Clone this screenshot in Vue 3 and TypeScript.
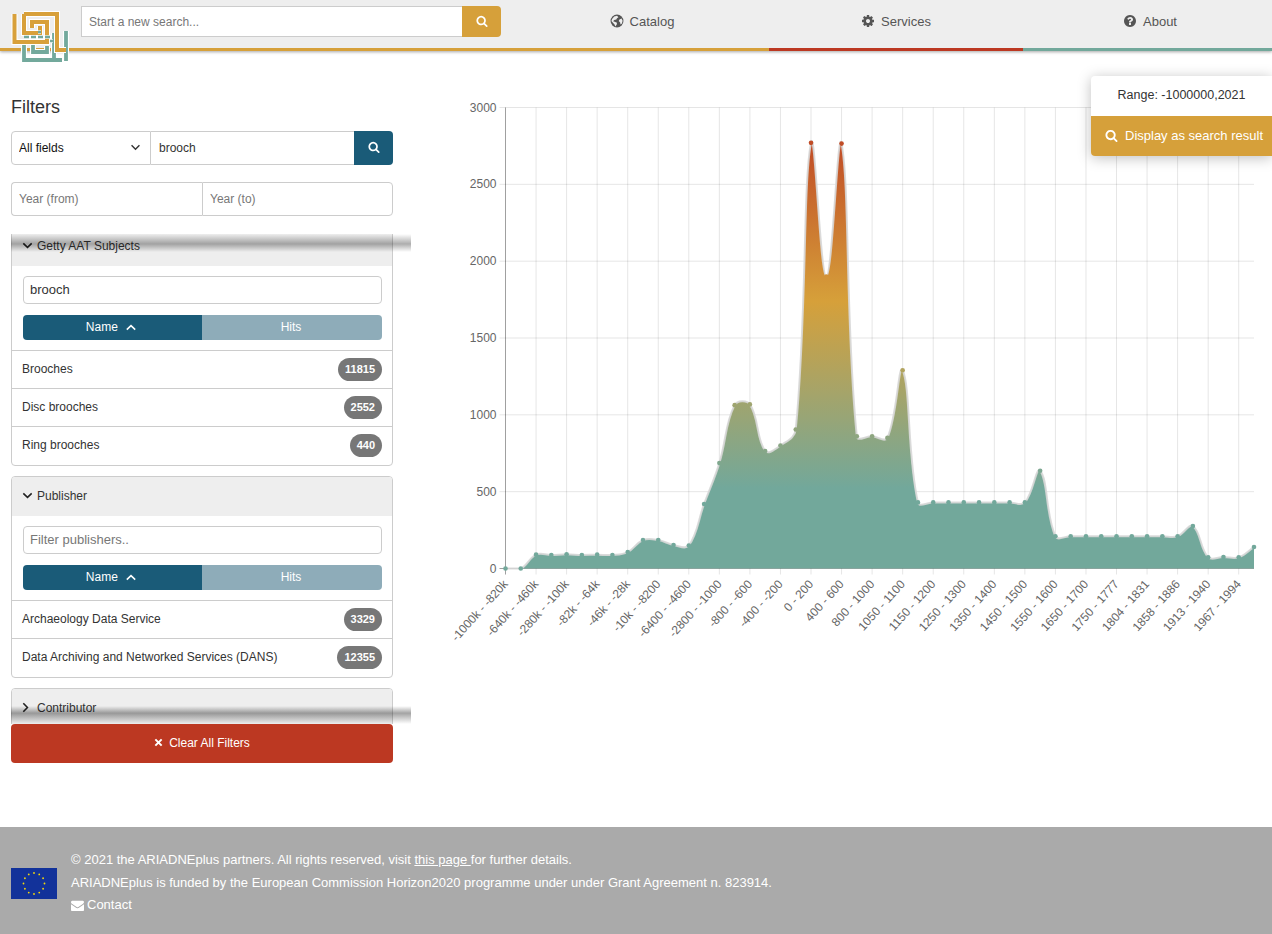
<template>
  <div class="page">
    <!-- Top bar -->
    <header class="topbar">
      <div class="topbar-left">
        <div class="search-box">
          <input class="search-input" type="text" placeholder="Start a new search..." />
          <button class="search-btn">
            <svg class="fa" viewBox="0 0 1792 1792"><path :d="ICONS.search" /></svg>
          </button>
        </div>
      </div>
      <a v-for="item in navItems" :key="item.label" class="nav-item" :class="item.cls">
        <svg v-if="item.label !== 'Catalog'" class="nav-icon" viewBox="0 0 1792 1792"><path :d="item.icon" /></svg>
        <svg v-else class="nav-icon" viewBox="0 0 20 20">
          <circle cx="10" cy="10" r="9.2" fill="#555" />
          <path d="M6 3.5l4-1 2 2-2 1.500-1 2-3 .5-1.500 2 3 1 2.500 1-.5 3-2 2.500-1-3-2-2-2.500-3 1-3zM13.500 8l3-1.500 1.500 3-1 4-2 1.500-.5-3-2-2z" fill="#eee" />
        </svg>
        <span>{{ item.label }}</span>
      </a>
    </header>

    <!-- Logo sits over the bar -->
    <svg class="logo" viewBox="10 8 60 58">
      <g fill="none" stroke-linejoin="miter">
        <path :d="LOGO_TEAL" stroke="#fff" stroke-width="6" />
        <path :d="LOGO_TEAL" stroke="#73a99c" stroke-width="3.800" />
        <path :d="LOGO_GOLD" stroke="#fff" stroke-width="6" />
        <path :d="LOGO_GOLD" stroke="#d8a03a" stroke-width="4" />
        <path d="M24 37H52M50 41H53M38 32H41" stroke="#fff" stroke-width="3.600" />
        <path d="M24 37H52M50 41H53M38 32H41" stroke="#73a99c" stroke-width="2.400" stroke-dasharray="5 2" />
      </g>
    </svg>

    <main class="content">
      <!-- Filters column -->
      <aside class="sidebar">
        <h2 class="filters-title">Filters</h2>

        <div class="input-row">
          <div class="select-wrap">
            <select class="field-select">
              <option>All fields</option>
            </select>
            <svg class="select-caret" viewBox="0 0 12 8"><path d="M1.500 1.500L6 6l4.500-4.500" /></svg>
          </div>
          <input class="field-input dark" type="text" value="brooch" />
          <button class="go-btn">
            <svg class="fa" viewBox="0 0 1792 1792"><path :d="ICONS.search" /></svg>
          </button>
        </div>

        <div class="input-row year-row">
          <input class="field-input" type="text" placeholder="Year (from)" />
          <input class="field-input" type="text" placeholder="Year (to)" />
        </div>

        <div class="facet-scroller">
          <div class="facet-list">
            <section v-for="facet in facets" :key="facet.title" class="facet">
              <div class="facet-head">
                <svg v-if="facet.open" class="chev" viewBox="0 0 12 8"><path d="M1.200 1.500L6 6.200l4.800-4.700" /></svg>
                <svg v-else class="chev chev-right" viewBox="0 0 8 12"><path d="M1.500 1.200L6.200 6l-4.700 4.800" /></svg>
                <span>{{ facet.title }}</span>
              </div>
              <template v-if="facet.open">
                <div class="facet-tools">
                  <input class="facet-input" type="text" :value="facet.query" :placeholder="facet.placeholder" />
                  <div class="sorter">
                    <button class="sort-btn active">
                      Name
                      <svg class="sort-chev" viewBox="0 0 12 8"><path d="M1.200 6.500L6 1.800l4.800 4.700" /></svg>
                    </button>
                    <button class="sort-btn">Hits</button>
                  </div>
                </div>
                <div v-for="row in facet.rows" :key="row.name" class="facet-row">
                  <span class="row-name">{{ row.name }}</span>
                  <span class="badge">{{ row.count }}</span>
                </div>
              </template>
            </section>
          </div>
          <div class="scroll-shade shade-top"></div>
          <div class="scroll-shade shade-bottom"></div>
        </div>

        <button class="clear-btn">
          <svg class="clear-x" viewBox="0 0 10 10"><path d="M1.500 1.500l7 7M8.500 1.500l-7 7" /></svg>
          Clear All Filters
        </button>
      </aside>

      <!-- Timeline chart -->
      <div class="chart-col">
        <svg class="chart" :viewBox="`450 95 822 560`">
          <defs>
            <linearGradient id="areaFill" gradientUnits="userSpaceOnUse" x1="0" y1="110" x2="0" y2="500">
              <stop offset="0" stop-color="#bc3a22" />
              <stop offset="0.49" stop-color="#d6a03a" />
              <stop offset="0.97" stop-color="#72a89b" />
              <stop offset="1" stop-color="#72a89b" />
            </linearGradient>
          </defs>

          <g class="grid">
            <line v-for="t in yTicks" :key="'h' + t" :x1="X0 - 6" :x2="X1" :y1="yPos(t)" :y2="yPos(t)" />
            <line v-for="(l, i) in xLabels" :key="'v' + i" :x1="xPos(i * 2)" :x2="xPos(i * 2)" :y1="Y_TOP" :y2="Y0 + 6" />
          </g>
          <line class="axis" :x1="X0" :x2="X0" :y1="Y_TOP" :y2="Y0 + 6" />
          <line class="axis" :x1="X0 - 6" :x2="X1" :y1="Y0" :y2="Y0" />

          <path :d="areaPath" fill="url(#areaFill)" />
          <path :d="linePath" class="area-line" />
          <circle v-for="(p, i) in points" :key="'p' + i" :cx="p.x" :cy="p.y" r="2.300" fill="url(#areaFill)" />

          <text v-for="t in yTicks" :key="'yl' + t" class="tick" text-anchor="end" :x="X0 - 9" :y="yPos(t) + 4">{{ t }}</text>
          <text
            v-for="(l, i) in xLabels"
            :key="'xl' + i"
            class="tick"
            text-anchor="end"
            :transform="`translate(${xPos(i * 2) + 3} ${Y0 + 16}) rotate(-48)`"
          >{{ l }}</text>
        </svg>
      </div>

      <!-- Selected range popup -->
      <div class="range-box">
        <div class="range-text">Range: -1000000,2021</div>
        <button class="range-btn">
          <svg class="range-icon" viewBox="0 0 1792 1792"><path :d="ICONS.search" /></svg>
          Display as search result
        </button>
      </div>
    </main>

    <footer class="footer">
      <svg class="flag" viewBox="0 0 46 31">
        <rect width="46" height="31" fill="#12329a" />
        <circle v-for="(s, i) in flagStars" :key="i" :cx="s.x" :cy="s.y" r="0.900" fill="#f5d90a" />
      </svg>
      <div class="footer-text">
        <div>© 2021 the ARIADNEplus partners. All rights reserved, visit <a class="footer-link">this page </a>for further details.</div>
        <div>ARIADNEplus is funded by the European Commission Horizon2020 programme under under Grant Agreement n. 823914.</div>
        <div class="contact">
          <svg class="mail" viewBox="0 0 1792 1792"><path :d="ICONS.envelope" /></svg>
          Contact
        </div>
      </div>
    </footer>
  </div>
</template>

<script setup lang="ts">
import { computed } from 'vue'

interface Point {
  x: number
  y: number
}

const ICONS = {
  search: 'M1216 832q0-185-131.500-316.500t-316.500-131.500-316.500 131.500-131.500 316.500 131.500 316.500 316.500 131.500 316.500-131.500 131.500-316.500zm512 832q0 52-38 90t-90 38q-54 0-90-38l-343-342q-179 124-399 124-143 0-273.500-55.500t-225-150-150-225-55.500-273.500 55.500-273.500 150-225 225-150 273.500-55.500 273.500 55.500 225 150 150 225 55.500 273.500q0 220-124 399l343 343q37 37 37 90z',
  cog: 'M1152 896q0-106-75-181t-181-75-181 75-75 181 75 181 181 75 181-75 75-181zm512-109v222q0 12-8 23t-20 13l-185 28q-19 54-39 91 35 50 107 138 10 12 10 25t-9 23q-27 37-99 108t-94 71q-12 0-26-9l-138-108q-44 23-91 38-16 136-29 186-7 28-36 28h-222q-14 0-24.500-8.500t-11.500-21.500l-28-184q-49-16-90-37l-141 107q-10 9-25 9-14 0-25-11-126-114-165-168-7-10-7-23 0-12 8-23 15-21 51-66.500t54-70.500q-27-50-41-99l-183-27q-13-2-21-12.500t-8-23.500v-222q0-12 8-23t19-13l186-28q14-46 39-92-40-57-107-138-10-12-10-24 0-10 9-23 26-36 98.500-107.500t94.500-71.500q13 0 26 10l138 107q44-23 91-38 16-136 29-186 7-28 36-28h222q14 0 24.500 8.500t11.500 21.500l28 184q49 16 90 37l142-107q9-9 24-9 13 0 25 10 129 119 165 170 7 8 7 22 0 12-8 23-15 21-51 66.500t-54 70.500q26 50 41 98l183 28q13 2 21 12.500t8 23.500z',
  question: 'M1024 1376v-192q0-14-9-23t-23-9h-192q-14 0-23 9t-9 23v192q0 14 9 23t23 9h192q14 0 23-9t9-23zm256-672q0-88-55.500-163t-138.500-116-170-41q-243 0-371 213-15 24 8 42l132 100q7 6 19 6 16 0 25-12 53-68 86-92 34-24 86-24 48 0 85.500 26t37.500 59q0 38-20 61t-68 45q-63 28-115.500 86.500t-52.500 125.500v36q0 14 9 23t23 9h192q14 0 23-9t9-23q0-19 21.500-49.500t54.500-49.500q32-18 49-28.500t46-35 44.500-48 28-60.500 12.500-81zm384 192q0 209-103 385.500t-279.500 279.500-385.500 103-385.500-103-279.500-279.500-103-385.500 103-385.500 279.500-279.500 385.500-103 385.500 103 279.500 279.500 103 385.500z',
  envelope: 'M1792 710v794q0 66-47 113t-113 47h-1472q-66 0-113-47t-47-113v-794q44 49 101 87 362 246 497 345 57 42 92.500 65.500t94.500 48 110 24.500h2q51 0 110-24.500t94.500-48 92.500-65.500q170-123 498-345 57-39 100-87zm0-294q0 79-49 151t-122 123q-376 261-468 325-10 7-42.500 30.500t-54 38-52 32.500-57.500 27-50 9h-2q-23 0-50-9t-57.500-27-52-32.500-54-38-42.500-30.500q-91-64-262-182.500t-205-142.500q-62-42-117-115.500t-55-136.500q0-78 41.500-130t118.500-52h1472q65 0 112.500 45t47.500 115z'
}

// two interlocking key spirals, page pixel coordinates
const LOGO_GOLD = 'M14.500 14V42H47V22H32V28M24 14V33H40V26M24 14H57V50H66'
const LOGO_TEAL = 'M66 31V61M24 42V60H62M33 42V52H47V46M54 33V60'

const navItems = [
  { label: 'Catalog', icon: '', cls: 'gold' },
  { label: 'Services', icon: ICONS.cog, cls: 'red' },
  { label: 'About', icon: ICONS.question, cls: 'teal' }
]

const facets = [
  {
    title: 'Getty AAT Subjects',
    open: true,
    query: 'brooch',
    placeholder: '',
    rows: [
      { name: 'Brooches', count: 11815 },
      { name: 'Disc brooches', count: 2552 },
      { name: 'Ring brooches', count: 440 }
    ]
  },
  {
    title: 'Publisher',
    open: true,
    query: '',
    placeholder: 'Filter publishers..',
    rows: [
      { name: 'Archaeology Data Service', count: 3329 },
      { name: 'Data Archiving and Networked Services (DANS)', count: 12355 }
    ]
  },
  { title: 'Contributor', open: false, query: '', placeholder: '', rows: [] }
]

// chart area, in page pixels
const X0 = 505.5
const X1 = 1254
const Y0 = 568.5
const Y_TOP = 107.5
const MAX = 3000

const values = [
  0, 0, 90, 88, 92, 88, 90, 88, 107, 185,
  185, 153, 150, 420, 686, 1063, 1068, 765, 800, 905,
  2770, 1900, 2765, 860, 860, 850, 1290, 430, 430, 430,
  430, 430, 430, 430, 430, 636, 210, 210, 210, 210,
  210, 210, 210, 210, 210, 276, 73, 75, 73, 140
]

const xLabels = [
  '-1000k - -820k', '-640k - -460k', '-280k - -100k', '-82k - -64k', '-46k - -28k',
  '-10k - -8200', '-6400 - -4600', '-2800 - -1000', '-800 - -600', '-400 - -200',
  '0 - 200', '400 - 600', '800 - 1000', '1050 - 1100', '1150 - 1200',
  '1250 - 1300', '1350 - 1400', '1450 - 1500', '1550 - 1600', '1650 - 1700',
  '1750 - 1777', '1804 - 1831', '1858 - 1886', '1913 - 1940', '1967 - 1994'
]

const yTicks = [0, 500, 1000, 1500, 2000, 2500, 3000]

const xPos = (i: number) => X0 + (i * (X1 - X0)) / (values.length - 1)
const yPos = (v: number) => Y0 - (v * (Y0 - Y_TOP)) / MAX

const points = computed<Point[]>(() => values.map((v, i) => ({ x: xPos(i), y: yPos(v) })))

// same bezier spline the chart lib uses, tension 0.4
const linePath = computed(() => {
  const pts = points.value
  const tension = 0.4
  const cps = pts.map((p, i) => {
    const prev = pts[i - 1] ?? p
    const next = pts[i + 1] ?? p
    const d01 = Math.hypot(p.x - prev.x, p.y - prev.y)
    const d12 = Math.hypot(next.x - p.x, next.y - p.y)
    const total = d01 + d12 || 1
    const fa = (tension * d01) / total
    const fb = (tension * d12) / total
    const clampY = (y: number) => Math.min(Math.max(y, Y_TOP), Y0)
    return {
      inX: p.x - fa * (next.x - prev.x),
      inY: clampY(p.y - fa * (next.y - prev.y)),
      outX: p.x + fb * (next.x - prev.x),
      outY: clampY(p.y + fb * (next.y - prev.y))
    }
  })
  let d = `M${pts[0].x} ${pts[0].y}`
  for (let i = 1; i < pts.length; i++) {
    d += `C${cps[i - 1].outX} ${cps[i - 1].outY} ${cps[i].inX} ${cps[i].inY} ${pts[i].x} ${pts[i].y}`
  }
  return d
})

const areaPath = computed(() => `${linePath.value}L${X1} ${Y0}L${X0} ${Y0}Z`)

const flagStars = Array.from({ length: 12 }, (_, i) => {
  const a = (i * Math.PI) / 6
  return { x: 23 + 10.5 * Math.sin(a), y: 15.5 - 10.5 * Math.cos(a) }
})
</script>

<style scoped>
.page {
  position: relative;
  font-family: "Liberation Sans", Arial, sans-serif;
  color: #333;
  font-size: 12px;
}

/* Top bar */
.topbar {
  display: flex;
  height: 51px;
  background: #eee;
  box-shadow: 0 1px 3px rgba(0, 0, 0, 0.35);
  position: relative;
}

.topbar-left {
  flex: 1;
  border-bottom: 3px solid #d6a03a;
  padding: 6px 0 0 81px;
}

.search-box {
  display: flex;
  width: 420px;
  height: 31px;
}

.search-input {
  flex: 1;
  min-width: 0;
  height: 31px;
  box-sizing: border-box;
  border: 1px solid #ccc;
  border-right: none;
  padding: 0 7px;
  font: 12px "Liberation Sans", Arial, sans-serif;
  outline: none;
  background: #fff;
}

.search-input::placeholder,
.field-input::placeholder,
.facet-input::placeholder {
  color: #777;
  opacity: 1;
}

.search-btn {
  width: 39px;
  border: none;
  background: #d6a03a;
  border-radius: 0 4px 4px 0;
  padding: 0;
  display: flex;
  align-items: center;
  justify-content: center;
}

.fa {
  width: 12px;
  height: 12px;
  margin-top: -2px;
  fill: #fff;
}

.nav-item {
  width: 254px;
  box-sizing: border-box;
  display: flex;
  align-items: center;
  justify-content: center;
  gap: 6px;
  padding-bottom: 6px;
  font-size: 13px;
  color: #555;
  border-bottom: 3px solid #d6a03a;
}

.nav-item.red {
  border-bottom-color: #bc3822;
}

.nav-item.teal {
  width: 249px;
  padding-left: 5px;
  border-bottom-color: #72a89b;
}

.nav-icon {
  width: 14px;
  height: 14px;
  fill: #555;
}

.logo {
  position: absolute;
  left: 10px;
  top: 8px;
  width: 60px;
  height: 58px;
}

/* Main */
.content {
  display: flex;
  height: 776px;
  position: relative;
}

.sidebar {
  width: 382px;
  margin-left: 11px;
  flex-shrink: 0;
}

.filters-title {
  margin: 46px 0 14px;
  font-size: 18px;
  line-height: 20px;
  font-weight: 400;
  color: #333;
}

.input-row {
  display: flex;
  height: 34px;
  margin-bottom: 17px;
}

.select-wrap {
  position: relative;
  width: 140px;
  flex-shrink: 0;
}

.field-select {
  appearance: none;
  width: 100%;
  height: 34px;
  box-sizing: border-box;
  padding: 0 7px;
  border: 1px solid #ccc;
  border-radius: 4px 0 0 4px;
  background: #fff;
  font: 12px "Liberation Sans", Arial, sans-serif;
  color: #111;
}

.select-caret {
  position: absolute;
  right: 10px;
  top: 13px;
  width: 11px;
  height: 7px;
  fill: none;
  stroke: #333;
  stroke-width: 1.6;
}

.field-input {
  flex: 1;
  min-width: 0;
  height: 34px;
  box-sizing: border-box;
  border: 1px solid #ccc;
  padding: 0 7px;
  font: 12px "Liberation Sans", Arial, sans-serif;
  outline: none;
  background: #fff;
}

.field-input.dark {
  border-left: none;
  border-right: none;
  padding-left: 8px;
  color: #333;
}

.year-row .field-input:first-child {
  flex: 0 0 191px;
  border-radius: 4px 0 0 4px;
  border-right: none;
}

.year-row .field-input:last-child {
  border-radius: 0 4px 4px 0;
}

.go-btn {
  width: 39px;
  border: none;
  padding: 0;
  background: #1a5b78;
  border-radius: 0 4px 4px 0;
  display: flex;
  align-items: center;
  justify-content: center;
}

/* Facets, clipped by a scroller wider than the column */
.facet-scroller {
  position: relative;
  width: 400px;
  height: 490px;
  margin-top: 18px;
  overflow: hidden;
}

.facet-list {
  width: 382px;
  margin-top: -8px;
}

.facet {
  border: 1px solid #ccc;
  border-radius: 4px;
  margin-bottom: 10.5px;
  overflow: hidden;
  background: #fff;
}

.facet-head {
  height: 39px;
  box-sizing: border-box;
  background: #eee;
  display: flex;
  align-items: center;
  gap: 4px;
  padding: 0 0 2px 10px;
  color: #333;
}

.chev {
  width: 11px;
  height: 7px;
  fill: none;
  stroke: #222;
  stroke-width: 1.8;
}

.chev-right {
  width: 7px;
  height: 11px;
  margin: 0 4px 0 0;
}

.facet-tools {
  padding: 10px 10px 10px 11px;
  border-bottom: 1px solid #ccc;
}

.facet-input {
  display: block;
  width: 100%;
  height: 28px;
  box-sizing: border-box;
  border: 1px solid #ccc;
  border-radius: 4px;
  padding: 0 6px 2px;
  font: 13px "Liberation Sans", Arial, sans-serif;
  color: #333;
  outline: none;
}

.sorter {
  display: flex;
  margin-top: 11px;
  height: 25px;
}

.sort-btn {
  flex: 1;
  border: none;
  padding: 0 2px 2px 0;
  background: #8eacb9;
  color: #fff;
  font: 12px "Liberation Sans", Arial, sans-serif;
  border-radius: 0 4px 4px 0;
}

.sort-btn.active {
  flex: 0 0 179px;
  background: #1a5b78;
  border-radius: 4px 0 0 4px;
}

.sort-chev {
  width: 12px;
  height: 7px;
  margin-left: 4px;
  fill: none;
  stroke: #fff;
  stroke-width: 1.8;
}

.facet-row {
  height: 37px;
  display: flex;
  align-items: center;
  justify-content: space-between;
  padding: 0 10px;
  border-bottom: 1px solid #ccc;
}

.facet-row:last-child {
  height: 37.5px;
  border-bottom: none;
}

.row-name {
  padding-bottom: 2px;
}

.badge {
  min-width: 10px;
  height: 23px;
  line-height: 22px;
  padding: 0 7px;
  border-radius: 12px;
  background: #777;
  color: #fff;
  font-size: 11px;
  font-weight: 700;
}

.scroll-shade {
  position: absolute;
  left: 0;
  right: 0;
  height: 18px;
  pointer-events: none;
}

.shade-top {
  top: 0;
  background: linear-gradient(to bottom, rgba(0, 0, 0, 0) 0%, rgba(0, 0, 0, 0.32) 55%, rgba(0, 0, 0, 0) 100%);
}

.shade-bottom {
  bottom: 0;
  background: linear-gradient(to bottom, rgba(0, 0, 0, 0) 0%, rgba(0, 0, 0, 0.36) 40%, rgba(0, 0, 0, 0) 100%);
}

.clear-btn {
  display: flex;
  align-items: center;
  justify-content: center;
  gap: 6px;
  width: 100%;
  height: 39px;
  border: none;
  border-radius: 4px;
  padding: 0 0 2px;
  background: #bc3822;
  color: #fff;
  font: 12px "Liberation Sans", Arial, sans-serif;
}

.clear-x {
  width: 9px;
  height: 9px;
  fill: none;
  stroke: #fff;
  stroke-width: 2.2;
}

/* Chart */
.chart-col {
  margin-left: 57px;
  padding-top: 44px;
}

.chart {
  display: block;
  width: 822px;
  height: 560px;
}

.grid line {
  stroke: rgba(0, 0, 0, 0.1);
  stroke-width: 1;
}

.axis {
  stroke: rgba(0, 0, 0, 0.3);
  stroke-width: 1;
}

.area-line {
  fill: none;
  stroke: rgba(215, 215, 215, 0.9);
  stroke-width: 2;
}

.tick {
  font: 12px "Liberation Sans", Arial, sans-serif;
  fill: #666;
}

.range-box {
  position: absolute;
  top: 25px;
  right: 0;
  width: 181px;
  height: 80px;
  background: #fff;
  border-radius: 4px 0 0 4px;
  box-shadow: 0 2px 14px rgba(0, 0, 0, 0.25);
  overflow: hidden;
}

.range-text {
  height: 40px;
  line-height: 39px;
  text-align: center;
  font-size: 12.5px;
  color: #333;
}

.range-btn {
  display: flex;
  align-items: center;
  gap: 7px;
  width: 100%;
  height: 40px;
  padding: 0 0 2px 14px;
  border: none;
  background: #d6a03a;
  color: #fff;
  font: 13px "Liberation Sans", Arial, sans-serif;
  white-space: nowrap;
}

.range-icon {
  width: 13px;
  height: 13px;
  fill: #fff;
}

/* Footer */
.footer {
  height: 107px;
  box-sizing: border-box;
  background: #aaa;
  display: flex;
  align-items: center;
  padding: 0 0 0 11px;
  color: #fff;
  font-size: 13px;
}

.flag {
  width: 46px;
  height: 31px;
  margin-right: 14px;
  flex-shrink: 0;
  margin-top: 5px;
}

.footer-text {
  line-height: 22.5px;
  margin-top: 5px;
}

.footer-link {
  text-decoration: underline;
}

.contact {
  display: flex;
  align-items: center;
  gap: 3px;
}

.mail {
  width: 13px;
  height: 13px;
  fill: #fff;
}
</style>
